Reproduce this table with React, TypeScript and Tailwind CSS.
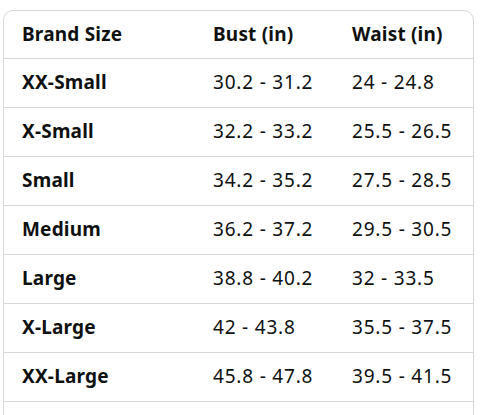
const ROWS = [
  { size: "XX-Small", bust: "30.2 - 31.2", waist: "24 - 24.8" },
  { size: "X-Small", bust: "32.2 - 33.2", waist: "25.5 - 26.5" },
  { size: "Small", bust: "34.2 - 35.2", waist: "27.5 - 28.5" },
  { size: "Medium", bust: "36.2 - 37.2", waist: "29.5 - 30.5" },
  { size: "Large", bust: "38.8 - 40.2", waist: "32 - 33.5" },
  { size: "X-Large", bust: "42 - 43.8", waist: "35.5 - 37.5" },
  { size: "XX-Large", bust: "45.8 - 47.8", waist: "39.5 - 41.5" },
  { size: "", bust: "", waist: "" },
];

export default function App() {
  return (
    <div
      className="h-[415px] w-[502px] overflow-hidden bg-white pl-[3px] pt-[10px] text-[19px] text-[#0f1111]"
      style={{ fontFamily: '"Noto Sans", "Open Sans", sans-serif' }}
    >
      {/* Size chart */}
      <div className="w-[471px] overflow-hidden rounded-t-[10px] border border-[#d5d9d9]">
        <table className="w-full table-fixed border-collapse">
          <colgroup>
            <col className="w-[191px]" />
            <col className="w-[139px]" />
            <col className="w-[139px]" />
          </colgroup>
          <thead>
            <tr className="h-[47px] text-left tracking-[0.2px]">
              <th className="pl-[18px] font-bold">Brand Size</th>
              <th className="pl-[18px] font-bold">Bust (in)</th>
              <th className="pl-[18px] font-bold">Waist (in)</th>
            </tr>
          </thead>
          <tbody>
            {ROWS.map((row, i) => (
              <tr key={i} className="h-[49px] border-t border-[#d5d9d9]">
                <td className="pl-[18px] font-bold tracking-[0.2px]">{row.size}</td>
                <td className="pl-[18px] tracking-[0.8px]">{row.bust}</td>
                <td className="pl-[18px] tracking-[0.8px]">{row.waist}</td>
              </tr>
            ))}
          </tbody>
        </table>
      </div>
    </div>
  );
}
